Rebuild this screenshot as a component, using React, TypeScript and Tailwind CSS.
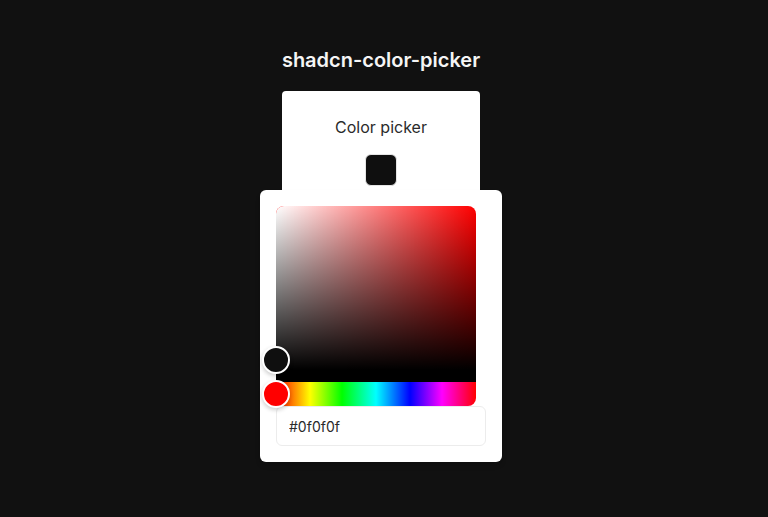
import { useState } from 'react'

// react-colorful style picker: saturation square, hue strip and hex field
function ColorPicker({ color, onChange }: { color: string; onChange: (c: string) => void }) {
  return (
    <div className="flex flex-col">
      <div className="relative w-[200px] h-[200px] flex flex-col">
        {/* saturation / value area, with 12px black band at the bottom */}
        <div className="relative h-[176px] rounded-t-lg border-b-[12px] border-black bg-[#ff0000] bg-[linear-gradient(to_top,#000,#0000),linear-gradient(to_right,#fff,#fff0)]">
          <div className="absolute left-0 top-[94%] z-30 w-[28px] h-[28px] -translate-x-1/2 -translate-y-1/2 rounded-full border-2 border-white bg-[#0f0f0f] shadow-[0_2px_4px_rgba(0,0,0,0.2)]" />
        </div>
        {/* hue strip */}
        <div className="relative h-[24px] rounded-b-lg bg-[linear-gradient(to_right,#f00_0%,#ff0_17%,#0f0_33%,#0ff_50%,#00f_67%,#f0f_83%,#f00_100%)]">
          <div className="absolute left-0 top-1/2 z-20 w-[28px] h-[28px] -translate-x-1/2 -translate-y-1/2 rounded-full border-2 border-white bg-[#ff0000] shadow-[0_2px_4px_rgba(0,0,0,0.2)]" />
        </div>
      </div>
      <input
        value={color}
        onChange={(e) => onChange(e.target.value)}
        className="h-[40px] w-full rounded-md border border-[#ececec] bg-white px-3 text-sm text-[#2a2a2a] outline-none"
      />
    </div>
  )
}

function App() {
  const [color, setColor] = useState('#0f0f0f')

  return (
    <div className="min-h-screen bg-[#111111] flex flex-col items-center pt-[46px] pr-[6px] font-['Inter',sans-serif]">
      <h1 className="text-xl leading-7 font-semibold text-[#f5f5f5] mb-[17px]">shadcn-color-picker</h1>

      <div className="w-[198px] rounded-[4px] bg-white flex flex-col items-center pt-6 pb-6 gap-[15px]">
        <div className="text-base leading-6 text-[#2b2b2b]">Color picker</div>
        <div className="relative">
          <button
            className="block w-[32px] h-[32px] rounded-md border border-[#e5e5e5]"
            style={{ backgroundColor: color }}
          />
          <div className="absolute left-1/2 top-full mt-1 -translate-x-1/2 z-10 w-[242px] rounded-md bg-white p-4 shadow-md">
            <ColorPicker color={color} onChange={setColor} />
          </div>
        </div>
      </div>
    </div>
  )
}

export default App
